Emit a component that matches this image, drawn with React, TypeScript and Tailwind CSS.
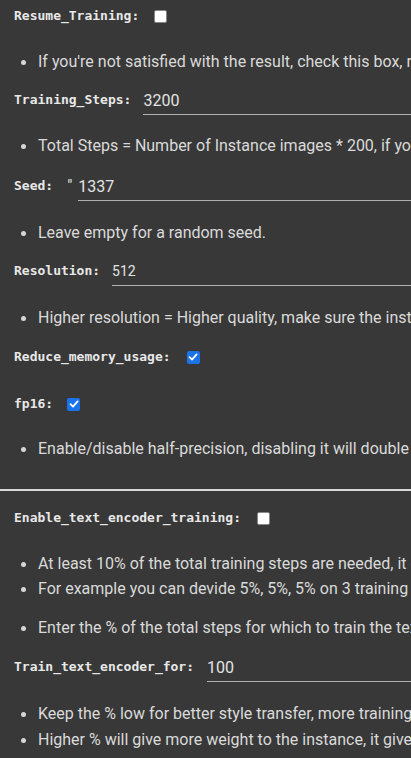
import React from "react";

const mono = { fontFamily: '"DejaVu Sans Mono", monospace' };

function Label({ children }: { children: React.ReactNode }) {
  return (
    <span className="text-[13px] font-bold text-[#e8e8e8] whitespace-nowrap" style={mono}>
      {children}
    </span>
  );
}

function Box({ checked }: { checked?: boolean }) {
  return checked ? (
    <span className="w-[13px] h-[13px] rounded-[2px] bg-[#1a73e8] flex items-center justify-center shrink-0">
      <svg width="10" height="10" viewBox="0 0 10 10">
        <path d="M1.5 5.2 L4 7.6 L8.6 2.4" stroke="white" strokeWidth="1.8" fill="none" strokeLinecap="round" strokeLinejoin="round" />
      </svg>
    </span>
  ) : (
    <span className="w-[13px] h-[13px] rounded-[2px] bg-white border border-[#888] shrink-0" />
  );
}

function Bullet({ children, mt }: { children: React.ReactNode; mt: string }) {
  return (
    <div className={`h-6 flex items-center whitespace-nowrap ${mt}`}>
      <span className="w-[5px] h-[5px] rounded-full bg-[#d6d6d6] ml-[21px] mr-[12px] shrink-0" />
      <span className="text-[16px] text-[#dadada]">{children}</span>
    </div>
  );
}

export default function App() {
  return (
    <div
      className="w-[411px] h-[758px] overflow-hidden bg-[#383838] text-[#dadada]"
      style={{ fontFamily: "Roboto, sans-serif" }}
    >
      <div className="h-8 flex items-center pl-[14px] gap-[15px]">
        <Label>Resume_Training:</Label>
        <Box />
      </div>
      <Bullet mt="mt-[18px]">If you're not satisfied with the result, check this box, run again the cell and it will continue training</Bullet>

      <div className="h-8 flex items-center pl-[14px] mt-[10px]">
        <Label>Training_Steps:</Label>
        <div className="ml-[12px] flex-1 h-[30px] border-b border-[#b0b0b0] flex items-center pt-[2px] text-[16px] text-[#e3e3e3]">3200</div>
      </div>
      <Bullet mt="mt-[18px]">Total Steps = Number of Instance images * 200, if you use 30 images, use 6000 steps</Bullet>

      <div className="h-8 flex items-center pl-[14px] mt-[12px]">
        <Label>Seed:</Label>
        <span className="ml-[14px] text-[16px] text-[#e3e3e3]">"</span>
        <div className="ml-[6px] flex-1 h-[30px] border-b border-[#b0b0b0] flex items-center pt-[2px] text-[16px] text-[#e3e3e3]">1337</div>
      </div>
      <Bullet mt="mt-[19px]">Leave empty for a random seed.</Bullet>

      <div className="h-8 flex items-center pl-[14px] mt-[10px]">
        <Label>Resolution:</Label>
        <div className="ml-[12px] flex-1 h-[30px] border-b border-[#b0b0b0] flex items-center pt-[2px] text-[14px] text-[#e3e3e3]">512</div>
      </div>
      <Bullet mt="mt-[19px]">Higher resolution = Higher quality, make sure the instance images are cropped to this selected size</Bullet>

      <div className="h-8 flex items-center pl-[14px] gap-[16px] mt-[11px]">
        <Label>Reduce_memory_usage:</Label>
        <Box checked />
      </div>
      <div className="h-8 flex items-center pl-[14px] gap-[14px] mt-[15px]">
        <Label>fp16:</Label>
        <Box checked />
      </div>
      <Bullet mt="mt-[17px]">Enable/disable half-precision, disabling it will double the training time and produce 4GB-5GB models.</Bullet>

      <div className="mt-[28px] h-[2px] bg-[#d8d8d8]" />

      <div className="h-8 flex items-center pl-[14px] gap-[16px] mt-[11px]">
        <Label>Enable_text_encoder_training:</Label>
        <Box />
      </div>
      <Bullet mt="mt-[18px]">At least 10% of the total training steps are needed, it doesn't matter if they're at the beginning or in the middle or the end</Bullet>
      <Bullet mt="mt-[1px]">For example you can devide 5%, 5%, 5% on 3 training runs on the model, or 0%, 0%, 15%</Bullet>
      <Bullet mt="mt-[15px]">Enter the % of the total steps for which to train the text_encoder</Bullet>

      <div className="h-8 flex items-center pl-[14px] mt-[11px]">
        <Label>Train_text_encoder_for:</Label>
        <div className="ml-[13px] flex-1 h-[30px] border-b border-[#b0b0b0] flex items-center pt-[2px] text-[16px] text-[#e3e3e3]">100</div>
      </div>
      <Bullet mt="mt-[19px]">Keep the % low for better style transfer, more training steps will be necessary for good results.</Bullet>
      <Bullet mt="mt-[2px]">Higher % will give more weight to the instance, it gives stronger results at lower steps count, but harder to stylize,</Bullet>
    </div>
  );
}
